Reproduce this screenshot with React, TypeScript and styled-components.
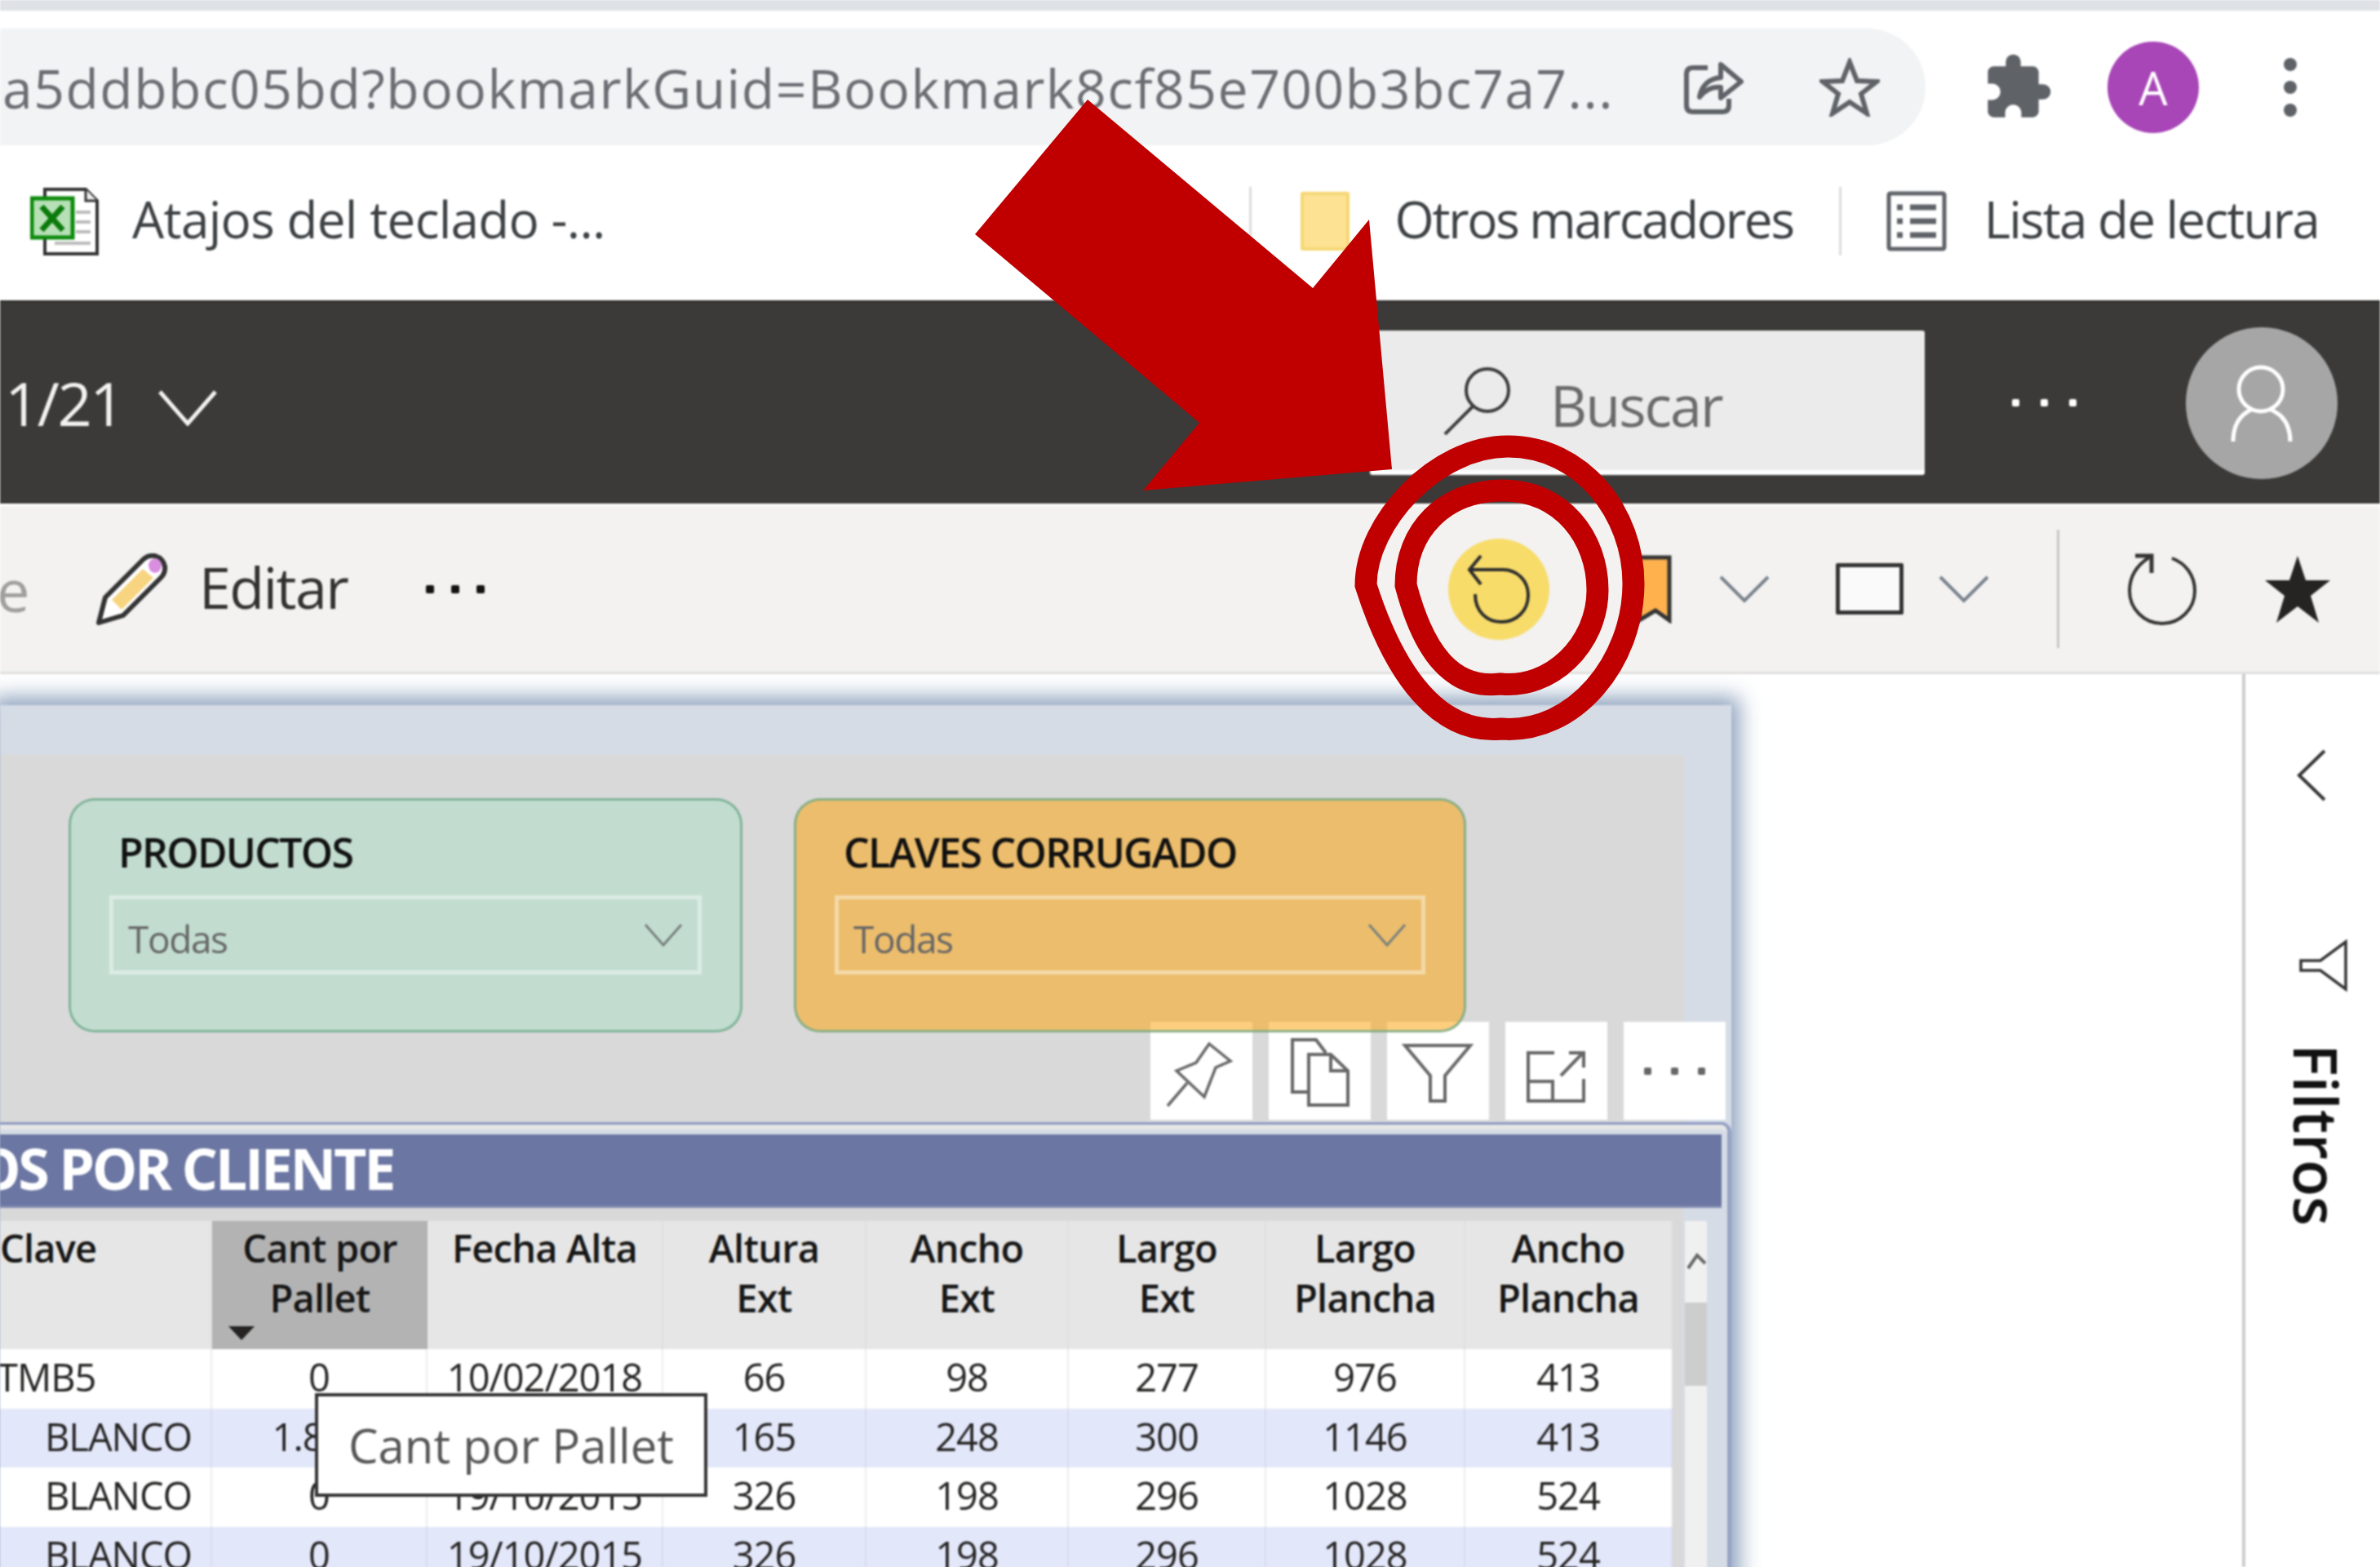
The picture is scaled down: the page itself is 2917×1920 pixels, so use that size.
import styled, { createGlobalStyle } from 'styled-components';
import { MdExtension } from 'react-icons/md';

const sans = `'Open Sans', 'Noto Sans', sans-serif`;

const GlobalStyle = createGlobalStyle`
  html, body {
    margin: 0;
    padding: 0;
    background: #fff;
  }
  * {
    box-sizing: border-box;
  }
`;

const Page = styled.div`
  position: relative;
  width: 2917px;
  height: 1920px;
  overflow: hidden;
  font-family: ${sans};
`;

const Screen = styled.div`
  display: flex;
  flex-direction: column;
  width: 100%;
  height: 100%;
  background: #fff;
  filter: blur(1.1px);
`;

const Annotation = styled.svg`
  position: absolute;
  inset: 0;
  pointer-events: none;
`;

const TabStrip = styled.div`
  flex: 0 0 13px;
  background: #dee1e6;
`;

const ChromeToolbar = styled.div`
  flex: 0 0 165px;
  display: flex;
  align-items: flex-end;
`;

const UrlPill = styled.div`
  flex: 0 0 2360px;
  height: 143px;
  display: flex;
  align-items: center;
  padding: 0 56px 0 3px;
  background: #f1f3f4;
  border-radius: 0 72px 72px 0;
`;

const UrlText = styled.div`
  flex: 1;
  font-size: 66px;
  letter-spacing: 1.5px;
  color: #6a6d72;
  white-space: nowrap;
`;

const PillIcons = styled.div`
  display: flex;
  align-items: center;
  gap: 93px;
`;

const ChromeActions = styled.div`
  height: 143px;
  display: flex;
  align-items: center;
  padding-left: 69px;
`;

const ProfileBadge = styled.div`
  width: 112px;
  height: 112px;
  margin-left: 66px;
  margin-right: 104px;
  display: flex;
  align-items: center;
  justify-content: center;
  border-radius: 50%;
  background: #a845b7;
  color: #fff;
  font-size: 56px;
`;

const Kebab = styled.div`
  display: flex;
  flex-direction: column;
  gap: 12px;
`;

const KebabDot = styled.span`
  width: 16px;
  height: 16px;
  border-radius: 50%;
  background: #5f6368;
`;

const BookmarksBar = styled.div`
  flex: 0 0 190px;
  display: flex;
  align-items: center;
  justify-content: space-between;
  padding: 0 75px 4px 37px;
`;

const BookmarkGroup = styled.div`
  display: flex;
  align-items: center;
`;

const BookmarkLabel = styled.span<{ $left: number; $tracking: number }>`
  margin-left: ${p => p.$left}px;
  padding-bottom: 6px;
  font-size: 62px;
  letter-spacing: ${p => p.$tracking}px;
  color: #3c4043;
  white-space: nowrap;
`;

const BarDivider = styled.span<{ $left: number }>`
  width: 3px;
  height: 84px;
  margin-left: ${p => p.$left}px;
  background: #dadce0;
`;

const FolderIcon = styled.span`
  width: 60px;
  height: 72px;
  margin-left: 60px;
  background: #fde293;
  border: 4px solid #f6d775;
  border-radius: 3px;
`;

const ListIconWrap = styled.span`
  display: flex;
  margin-left: 55px;
`;

const AppBar = styled.div`
  flex: 0 0 249px;
  display: flex;
  align-items: center;
  padding: 0 52px 0 6px;
  background: #3b3a39;
  border-top: 2px solid #2d2c2b;
`;

const PageCount = styled.span`
  font-size: 74px;
  letter-spacing: -2.5px;
  color: #f3f2f1;
`;

const PageChevron = styled.span`
  display: flex;
  margin: 12px 0 0 44px;
`;

const SearchBox = styled.div`
  width: 680px;
  height: 177px;
  margin-left: auto;
  display: flex;
  align-items: center;
  padding-left: 89px;
  background: #ebebeb;
  border-bottom: 6px solid #fff;
  border-radius: 3px;
`;

const SearchLabel = styled.span`
  margin-left: 48px;
  padding-top: 10px;
  font-size: 70px;
  letter-spacing: -2px;
  color: #6a6a6a;
`;

const Dots = styled.div<{ $gap: number; $size: number; $color: string }>`
  display: flex;
  gap: ${p => p.$gap}px;

  span {
    width: ${p => p.$size}px;
    height: ${p => p.$size}px;
    background: ${p => p.$color};
    border-radius: 2px;
  }
`;

const AppBarDots = styled.div`
  margin-left: 107px;
  margin-right: 134px;
`;

const Avatar = styled.div`
  width: 186px;
  height: 186px;
  display: flex;
  border-radius: 50%;
  background: #a6a6a6;
`;

const Ribbon = styled.div`
  flex: 0 0 209px;
  display: flex;
  align-items: center;
  background: #f3f2f1;
  border-top: 3px solid #fff;
  border-bottom: 3px solid #e1dfdd;
  padding-right: 63px;
`;

const RibbonSlot = styled.div<{ $left: number }>`
  display: flex;
  align-items: center;
  margin-left: ${p => p.$left}px;
`;

const DisabledText = styled.span`
  margin-left: -4px;
  width: 36px;
  font-size: 72px;
  color: #a19f9d;
`;

const EditLabel = styled.span`
  padding-bottom: 6px;
  font-size: 70px;
  letter-spacing: -1.6px;
  color: #323130;
`;

const YellowBadge = styled.div`
  width: 124px;
  height: 124px;
  display: flex;
  align-items: center;
  justify-content: center;
  border-radius: 50%;
  background: #f8dc6a;
`;

const ViewBox = styled.span`
  width: 83px;
  height: 63px;
  background: #fafafa;
  border: 5px solid #333;
  border-radius: 2px;
`;

const RibbonDivider = styled.span`
  width: 3px;
  height: 145px;
  background: #c8c6c4;
`;

const Body = styled.div`
  flex: 1;
  display: flex;
  min-height: 0;
`;

const Canvas = styled.div`
  flex: 0 0 2748px;
  padding-top: 38px;
`;

const ReportFrame = styled.div`
  width: 2122px;
  height: 1100px;
  padding-top: 61px;
  background: #d5dce6;
  box-shadow: 0 0 24px 10px rgba(130, 152, 182, 0.9);
`;

const SlicerPanel = styled.div`
  position: relative;
  width: 2064px;
  height: 450px;
  display: flex;
  gap: 63px;
  padding: 53px 0 0 84px;
  background: #d9d9d9;
`;

const Slicer = styled.div<{ $bg: string; $width: number }>`
  position: relative;
  z-index: 2;
  width: ${p => p.$width}px;
  height: 287px;
  padding: 38px 47px 0;
  background: ${p => p.$bg};
  border: 3px solid rgba(112, 170, 140, 0.8);
  border-radius: 32px;
`;

const SlicerTitle = styled.div`
  height: 50px;
  margin-bottom: 28px;
  padding-left: 11px;
  font-size: 50px;
  line-height: 50px;
  font-weight: 600;
  letter-spacing: -1.7px;
  color: #111;
`;

const SlicerField = styled.div`
  height: 97px;
  display: flex;
  align-items: center;
  justify-content: space-between;
  padding: 0 18px;
  border: 5px solid rgba(255, 255, 255, 0.42);
`;

const SlicerValue = styled.span`
  padding-top: 8px;
  font-size: 46px;
  letter-spacing: -1.4px;
  color: #666;
`;

const HoverBar = styled.div`
  position: absolute;
  z-index: 1;
  left: 1410px;
  top: 327px;
  display: flex;
  gap: 20px;
`;

const HoverButton = styled.div`
  width: 125px;
  height: 120px;
  display: flex;
  align-items: center;
  justify-content: center;
  background: #fff;
`;

const TableVisual = styled.div`
  width: 2122px;
  padding-top: 12px;
  background: #d5dce6;
  border-top: 3px solid #8f9ac2;
  border-right: 5px solid #98a3c6;
  border-top-right-radius: 12px;
  box-shadow: inset 0 6px 0 #e6e6e6;
`;

const TitleBand = styled.div`
  width: 2110px;
  height: 90px;
  display: flex;
  align-items: center;
  background: #6b76a2;
  border-bottom: 3px solid #7f89ae;
`;

const TitleClip = styled.div`
  width: 482px;
  display: flex;
  justify-content: flex-end;
  overflow: hidden;
  padding-bottom: 6px;
  font-size: 70px;
  font-weight: 700;
  letter-spacing: -3.4px;
  color: #fff;
  white-space: nowrap;
`;

const TableArea = styled.div`
  display: flex;
`;

const TableWell = styled.div`
  width: 2063px;
  padding-top: 16px;
  background: #d9d9d9;
`;

const TableGrid = styled.div`
  position: relative;
  width: 2050px;
  display: grid;
  grid-template-columns: 260px 264px 289px 249px 248px 242px 244px 254px;
`;

const HeadCell = styled.div<{ $sorted?: boolean; $left?: boolean }>`
  position: relative;
  height: 157px;
  padding-top: 3px;
  background: ${p => (p.$sorted ? '#b3b3b3' : '#e6e6e6')};
  border-right: ${p => (p.$sorted ? 'none' : '2px solid #dfdfdf')};
  text-align: ${p => (p.$left ? 'left' : 'center')};
  font-size: 47px;
  line-height: 61px;
  font-weight: 600;
  letter-spacing: -0.8px;
  color: #161616;
`;

const SortArrow = styled.span`
  position: absolute;
  left: 20px;
  bottom: 11px;
  width: 0;
  height: 0;
  border-left: 16px solid transparent;
  border-right: 16px solid transparent;
  border-top: 17px solid #252423;
`;

const Cell = styled.div<{ $alt: boolean; $indent?: number; $left?: boolean }>`
  height: 72.5px;
  padding-left: ${p => p.$indent ?? 0}px;
  background: ${p => (p.$alt ? '#e3e7fa' : '#fff')};
  border-right: 2px solid ${p => (p.$alt ? '#d9dcee' : '#ececec')};
  text-align: ${p => (p.$left ? 'left' : 'center')};
  font-size: 47px;
  line-height: 68px;
  letter-spacing: -1px;
  color: #252423;
  white-space: nowrap;
  overflow: hidden;
`;

const ClippedValue = styled.span`
  display: inline-block;
  margin-left: -4px;
`;

const Tooltip = styled.div`
  position: absolute;
  left: 386px;
  top: 211px;
  width: 481px;
  height: 127px;
  display: flex;
  align-items: center;
  justify-content: center;
  background: #fff;
  border: 4px solid #333;
  font-size: 58px;
  letter-spacing: 0px;
  color: #555;
`;

const ScrollRail = styled.div`
  width: 27px;
  margin: 16px 0 0 2px;
`;

const ScrollCap = styled.div`
  height: 100px;
  padding-top: 38px;
  display: flex;
  justify-content: center;
  background: #f0f0f0;
`;

const ScrollThumb = styled.div`
  height: 102px;
  background: #cdcdcd;
`;

const ScrollTrack = styled.div`
  height: 260px;
  background: #f0f0f0;
`;

const FilterPane = styled.div`
  flex: 1;
  display: flex;
  flex-direction: column;
  align-items: flex-start;
  padding: 92px 0 0 57px;
  border-left: 4px solid #cdcdcd;
`;

const PaneChevronWrap = styled.span`
  display: flex;
  margin-left: 6px;
`;

const FilterFunnel = styled.span`
  display: flex;
  margin: 169px 0 0 9px;
`;

const FilterLabel = styled.span`
  margin: 64px 0 0 -9px;
  writing-mode: vertical-rl;
  font-size: 74px;
  line-height: 78px;
  font-weight: 600;
  color: #111;
`;

const ThinChevron = ({ w, h, color, sw = 4 }: { w: number; h: number; color: string; sw?: number }) => (
  <svg width={w} height={h} viewBox={`0 0 ${w} ${h}`} fill="none" stroke={color} strokeWidth={sw}>
    <path d={`M2 2 L${w / 2} ${h - 3} L${w - 2} 2`} />
  </svg>
);

const ThreeDots = ({ gap, size, color }: { gap: number; size: number; color: string }) => (
  <Dots $gap={gap} $size={size} $color={color}>
    <span />
    <span />
    <span />
  </Dots>
);

const ShareIcon = () => (
  <svg width="74" height="68" viewBox="0 0 74 68" fill="none" stroke="#5f6368" strokeWidth="6" strokeLinejoin="round">
    <path d="M30 10 H12 Q4 10 4 18 V56 Q4 64 12 64 H48 Q56 64 56 56 V48" />
    <path d="M20 46 C22 32 32 23 46 22 V6 L71 27 L46 47 V34 C36 33 27 37 20 46 Z" />
  </svg>
);

const StarOutline = () => (
  <svg width="74" height="72" viewBox="0 0 74 72" fill="none" stroke="#5f6368" strokeWidth="6" strokeLinejoin="miter">
    <path d="M37 5 L46 28 L70 29 L51 44 L58 68 L37 54 L16 68 L23 44 L4 29 L28 28 Z" />
  </svg>
);

const ExcelIcon = () => (
  <svg width="84" height="83" viewBox="0 0 84 83">
    <path d="M18 2 H68 L82 16 V81 H18 Z" fill="#fff" stroke="#333" strokeWidth="4" />
    <path d="M68 2 V16 H82" fill="#eee" stroke="#333" strokeWidth="3" />
    <path d="M56 30 H74 M56 42 H74 M56 54 H74 M30 68 H74" stroke="#bbb" strokeWidth="4" />
    <rect x="2" y="13" width="50" height="48" fill="#b7e0b7" stroke="#0b8a0b" strokeWidth="5" />
    <path d="M14 23 L40 52 M40 23 L14 52" stroke="#0b7a0b" strokeWidth="7" />
  </svg>
);

const ListIcon = () => (
  <svg width="74" height="74" viewBox="0 0 74 74" fill="none" stroke="#5f6368" strokeWidth="5">
    <rect x="3" y="3" width="68" height="68" rx="2" />
    <path d="M13 20 H20 M13 37 H20 M13 54 H20 M29 20 H61 M29 37 H61 M29 54 H61" strokeWidth="7" />
  </svg>
);

const SearchIcon = () => (
  <svg width="84" height="84" viewBox="0 0 84 84" fill="none" stroke="#3a3a3a" strokeWidth="4">
    <circle cx="55" cy="29" r="26" />
    <path d="M37 49 L3 83" />
  </svg>
);

const PersonIcon = () => (
  <svg width="186" height="186" viewBox="0 0 186 186" fill="none" stroke="#fff" strokeWidth="5">
    <circle cx="92" cy="76" r="27" />
    <path d="M58 140 C58 118 68 106 82 100 M128 140 C128 118 118 106 102 100" />
  </svg>
);

const PencilIcon = () => (
  <svg width="88" height="88" viewBox="0 0 88 88" fill="#fff" stroke="#333" strokeWidth="6" strokeLinejoin="round">
    <path d="M3 85 L11 54 L58 7 Q64 2 72 3 Q82 6 84 16 Q85 24 79 30 L33 76 Z" />
    <path d="M19 57 L57 19 L70 30 L31 69 Z" fill="#f7d47f" stroke="none" />
    <ellipse cx="72" cy="15" rx="8" ry="9" fill="#d98ee0" stroke="none" />
  </svg>
);

const UndoIcon = () => (
  <svg width="78" height="86" viewBox="0 0 78 86" fill="none" stroke="#2c2c2c" strokeWidth="4">
    <path d="M3 19 H44 C62 19 75 33 75 50 C75 70 60 83 42 83 C24 83 10 70 10 49" />
    <path d="M17 2 L3 19 L17 37" />
  </svg>
);

const BookmarkIcon = () => (
  <svg width="42" height="84" viewBox="0 0 42 84">
    <path d="M2 3 H39 V80 L22 68 L2 80 Z" fill="#ffb14e" stroke="#333" strokeWidth="5" />
  </svg>
);

const RefreshIcon = () => (
  <svg width="88" height="88" viewBox="0 0 88 88" fill="none" stroke="#333" strokeWidth="4">
    <path d="M56 6 C72 12 84 26 84 46 C84 68 66 86 44 86 C22 86 4 68 4 46 C4 28 14 14 28 5" />
    <path d="M11 3 H31 V24" strokeWidth="5" />
  </svg>
);

const StarSolid = () => (
  <svg width="80" height="82" viewBox="0 0 80 82">
    <path d="M40 0 L50 30 L80 30 L56 49 L66 82 L40 62 L14 82 L24 49 L0 30 L30 30 Z" fill="#252423" />
  </svg>
);

const PinIcon = () => (
  <svg width="125" height="120" viewBox="0 0 125 120" fill="none" stroke="#666" strokeWidth="3.5">
    <path d="M72 27 L98 48 L80 56 L66 92 L32 60 L56 50 Z" />
    <path d="M45 75 L21 103" />
  </svg>
);

const CopyIcon = () => (
  <svg width="125" height="120" viewBox="0 0 125 120" fill="none" stroke="#666" strokeWidth="4">
    <path d="M48 86 H29 V22 H58 L70 38" />
    <path d="M49 40 H76 L97 60 V102 H49 Z" />
    <path d="M76 40 V60 H97" />
  </svg>
);

const FunnelIcon = () => (
  <svg width="125" height="120" viewBox="0 0 125 120" fill="none" stroke="#666" strokeWidth="4">
    <path d="M22 29 H102 L71 66 V97 H53 V66 Z" />
  </svg>
);

const FocusIcon = () => (
  <svg width="125" height="120" viewBox="0 0 125 120" fill="none" stroke="#666" strokeWidth="4">
    <path d="M60 38 H28 V97 H96 V70 M28 73 H58 V97" />
    <path d="M68 66 L95 38 M78 38 H96 V56" />
  </svg>
);

const PaneFunnel = () => (
  <svg width="60" height="64" viewBox="0 0 60 64" fill="none" stroke="#333" strokeWidth="3.5">
    <path d="M2 26 H26 L57 3 V61 L26 38 H2 Z" />
  </svg>
);

const PaneChevron = () => (
  <svg width="36" height="64" viewBox="0 0 36 64" fill="none" stroke="#333" strokeWidth="4">
    <path d="M34 2 L3 32 L34 62" />
  </svg>
);

const ScrollUp = () => (
  <svg width="24" height="22" viewBox="0 0 24 22" fill="none" stroke="#666" strokeWidth="4">
    <path d="M2 20 L13 4 L23 14" />
  </svg>
);

const headLines: string[][] = [
  ['Clave'],
  ['Cant por', 'Pallet'],
  ['Fecha Alta'],
  ['Altura', 'Ext'],
  ['Ancho', 'Ext'],
  ['Largo', 'Ext'],
  ['Largo', 'Plancha'],
  ['Ancho', 'Plancha'],
];

const rows: string[][] = [
  ['TMB5', '0', '10/02/2018', '66', '98', '277', '976', '413'],
  ['BLANCO', '1.800', '19/10/2015', '165', '248', '300', '1146', '413'],
  ['BLANCO', '0', '19/10/2015', '326', '198', '296', '1028', '524'],
  ['BLANCO', '0', '19/10/2015', '326', '198', '296', '1028', '524'],
];

const App = () => (
  <Page>
    <GlobalStyle />
    <Screen>
      <TabStrip />
      <ChromeToolbar>
        <UrlPill>
          <UrlText>a5ddbbc05bd?bookmarkGuid=Bookmark8cf85e700b3bc7a7...</UrlText>
          <PillIcons>
            <ShareIcon />
            <StarOutline />
          </PillIcons>
        </UrlPill>
        <ChromeActions>
          <MdExtension size={88} color="#5f6368" />
          <ProfileBadge>A</ProfileBadge>
          <Kebab>
            <KebabDot />
            <KebabDot />
            <KebabDot />
          </Kebab>
        </ChromeActions>
      </ChromeToolbar>

      <BookmarksBar>
        <BookmarkGroup>
          <ExcelIcon />
          <BookmarkLabel $left={41} $tracking={-0.7}>
            Atajos del teclado -...
          </BookmarkLabel>
        </BookmarkGroup>
        <BookmarkGroup>
          <BarDivider $left={0} />
          <FolderIcon />
          <BookmarkLabel $left={56} $tracking={-2.3}>
            Otros marcadores
          </BookmarkLabel>
          <BarDivider $left={56} />
          <ListIconWrap>
            <ListIcon />
          </ListIconWrap>
          <BookmarkLabel $left={46} $tracking={-1.8}>
            Lista de lectura
          </BookmarkLabel>
        </BookmarkGroup>
      </BookmarksBar>

      <AppBar>
        <PageCount>1/21</PageCount>
        <PageChevron>
          <ThinChevron w={72} h={44} color="#f3f2f1" sw={5} />
        </PageChevron>
        <SearchBox>
          <SearchIcon />
          <SearchLabel>Buscar</SearchLabel>
        </SearchBox>
        <AppBarDots>
          <ThreeDots gap={26} size={9} color="#fff" />
        </AppBarDots>
        <Avatar>
          <PersonIcon />
        </Avatar>
      </AppBar>

      <Ribbon>
        <DisabledText>e</DisabledText>
        <RibbonSlot $left={86}>
          <PencilIcon />
        </RibbonSlot>
        <RibbonSlot $left={38}>
          <EditLabel>Editar</EditLabel>
        </RibbonSlot>
        <RibbonSlot $left={96}>
          <ThreeDots gap={21} size={10} color="#111" />
        </RibbonSlot>
        <RibbonSlot $left={1181}>
          <YellowBadge>
            <UndoIcon />
          </YellowBadge>
        </RibbonSlot>
        <RibbonSlot $left={108}>
          <BookmarkIcon />
        </RibbonSlot>
        <RibbonSlot $left={58}>
          <ThinChevron w={62} h={34} color="#79818c" />
        </RibbonSlot>
        <RibbonSlot $left={81}>
          <ViewBox />
        </RibbonSlot>
        <RibbonSlot $left={43}>
          <ThinChevron w={62} h={34} color="#79818c" />
        </RibbonSlot>
        <RibbonSlot $left={83}>
          <RibbonDivider />
        </RibbonSlot>
        <RibbonSlot $left={82}>
          <RefreshIcon />
        </RibbonSlot>
        <RibbonSlot $left={82}>
          <StarSolid />
        </RibbonSlot>
      </Ribbon>

      <Body>
        <Canvas>
          <ReportFrame>
            <SlicerPanel>
              <Slicer $bg="rgba(176, 224, 201, 0.56)" $width={826}>
                <SlicerTitle>PRODUCTOS</SlicerTitle>
                <SlicerField>
                  <SlicerValue>Todas</SlicerValue>
                  <ThinChevron w={48} h={30} color="#77807c" sw={3} />
                </SlicerField>
              </Slicer>
              <Slicer $bg="rgba(251, 167, 24, 0.56)" $width={824}>
                <SlicerTitle>CLAVES CORRUGADO</SlicerTitle>
                <SlicerField>
                  <SlicerValue>Todas</SlicerValue>
                  <ThinChevron w={48} h={30} color="#77807c" sw={3} />
                </SlicerField>
              </Slicer>
              <HoverBar>
                <HoverButton>
                  <PinIcon />
                </HoverButton>
                <HoverButton>
                  <CopyIcon />
                </HoverButton>
                <HoverButton>
                  <FunnelIcon />
                </HoverButton>
                <HoverButton>
                  <FocusIcon />
                </HoverButton>
                <HoverButton>
                  <ThreeDots gap={24} size={9} color="#666" />
                </HoverButton>
              </HoverBar>
            </SlicerPanel>

            <TableVisual>
              <TitleBand>
                <TitleClip>OS POR CLIENTE</TitleClip>
              </TitleBand>
              <TableArea>
                <TableWell>
                  <TableGrid>
                    {headLines.map((lines, i) => (
                      <HeadCell key={lines.join(' ')} $sorted={i === 1} $left={i === 0}>
                        {lines.map(line => (
                          <div key={line}>{line}</div>
                        ))}
                        {i === 1 && <SortArrow />}
                      </HeadCell>
                    ))}
                    {rows.map((row, r) =>
                      row.map((value, c) => (
                        <Cell
                          key={`${r}-${c}`}
                          $alt={r % 2 === 1}
                          $left={c === 0}
                          $indent={c === 0 && r > 0 ? 55 : 0}
                        >
                          {c === 0 && r === 0 ? <ClippedValue>{value}</ClippedValue> : value}
                        </Cell>
                      ))
                    )}
                    <Tooltip>Cant por Pallet</Tooltip>
                  </TableGrid>
                </TableWell>
                <ScrollRail>
                  <ScrollCap>
                    <ScrollUp />
                  </ScrollCap>
                  <ScrollThumb />
                  <ScrollTrack />
                </ScrollRail>
              </TableArea>
            </TableVisual>
          </ReportFrame>
        </Canvas>
        <FilterPane>
          <PaneChevronWrap>
            <PaneChevron />
          </PaneChevronWrap>
          <FilterFunnel>
            <PaneFunnel />
          </FilterFunnel>
          <FilterLabel>Filtros</FilterLabel>
        </FilterPane>
      </Body>
    </Screen>

    <Annotation width="2917" height="1920" viewBox="0 0 2917 1920">
      <polygon
        points="1333,122 1609,353 1678,269 1706,575 1401,601 1470,518 1195,287"
        fill="#c00000"
      />
      <path
        d="M1840 893 C1765 900 1710 830 1674 717 C1674 640 1760 547 1848 547 C1940 547 2002 630 2002 715 C2002 810 1930 900 1840 893 Z"
        fill="none"
        stroke="#c00000"
        strokeWidth="27"
      />
      <path
        d="M1839 838 C1780 845 1745 800 1723 717 C1723 650 1770 601 1842 601 C1915 601 1958 660 1958 723 C1958 790 1900 845 1839 838 Z"
        fill="none"
        stroke="#c00000"
        strokeWidth="27"
      />
    </Annotation>
  </Page>
);

export default App;
